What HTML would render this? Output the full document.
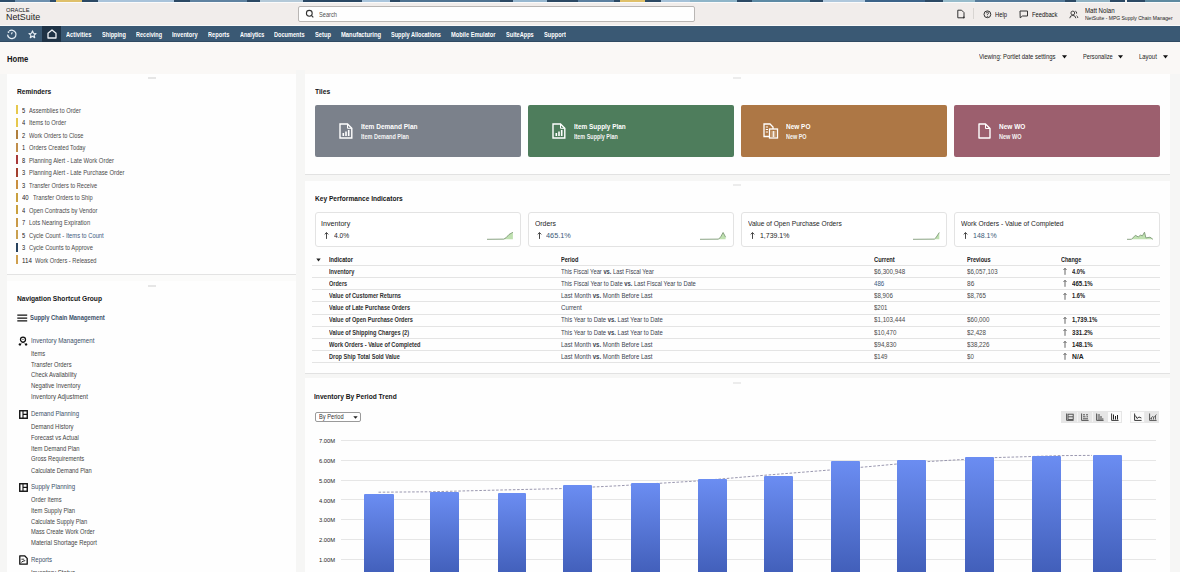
<!DOCTYPE html>
<html><head><meta charset="utf-8">
<style>
html,body{margin:0;padding:0;width:1180px;height:572px;overflow:hidden;background:#faf8f6;}
body{position:relative;font-family:"Liberation Sans",sans-serif;}
.t{position:absolute;white-space:pre;line-height:1;transform-origin:0 0;}
.abs{position:absolute;}
</style></head><body>
<div class="abs" style="left:0;top:2px;width:1180px;height:24px;background:#f1edeb;border-top:1.5px solid #fbfbfb;border-bottom:1.5px solid #fafafa;box-sizing:border-box"></div>
<div style="position:absolute;left:0px;top:0px;width:15px;height:2px;background:#2e4d6a"></div>
<div style="position:absolute;left:15px;top:0px;width:35px;height:2px;background:#6e90ae"></div>
<div style="position:absolute;left:50px;top:0px;width:6px;height:2px;background:#2e4d6a"></div>
<div style="position:absolute;left:56px;top:0px;width:26px;height:2px;background:#dfc06a"></div>
<div style="position:absolute;left:82px;top:0px;width:16px;height:2px;background:#2c4964"></div>
<div style="position:absolute;left:98px;top:0px;width:76px;height:2px;background:#a9c3da"></div>
<div style="position:absolute;left:174px;top:0px;width:16px;height:2px;background:#2c4964"></div>
<div style="position:absolute;left:190px;top:0px;width:57px;height:2px;background:#5f82a0"></div>
<div style="position:absolute;left:247px;top:0px;width:13px;height:2px;background:#2c4964"></div>
<div style="position:absolute;left:260px;top:0px;width:43px;height:2px;background:#b4c9d8"></div>
<div style="position:absolute;left:303px;top:0px;width:59px;height:2px;background:#2a4864"></div>
<div style="position:absolute;left:362px;top:0px;width:28px;height:2px;background:#aac5dc"></div>
<div style="position:absolute;left:390px;top:0px;width:10px;height:2px;background:#2c4964"></div>
<div style="position:absolute;left:400px;top:0px;width:100px;height:2px;background:#4f7391"></div>
<div style="position:absolute;left:500px;top:0px;width:13px;height:2px;background:#2c4964"></div>
<div style="position:absolute;left:513px;top:0px;width:34px;height:2px;background:#98b8d0"></div>
<div style="position:absolute;left:547px;top:0px;width:31px;height:2px;background:#2c4964"></div>
<div style="position:absolute;left:578px;top:0px;width:36px;height:2px;background:#5c80a0"></div>
<div style="position:absolute;left:614px;top:0px;width:6px;height:2px;background:#2c4964"></div>
<div style="position:absolute;left:620px;top:0px;width:25px;height:2px;background:#dfc06a"></div>
<div style="position:absolute;left:645px;top:0px;width:16px;height:2px;background:#2c4964"></div>
<div style="position:absolute;left:661px;top:0px;width:29px;height:2px;background:#a5c1d8"></div>
<div style="position:absolute;left:690px;top:0px;width:47px;height:2px;background:#8fb5c8"></div>
<div style="position:absolute;left:737px;top:0px;width:15px;height:2px;background:#2c4964"></div>
<div style="position:absolute;left:752px;top:0px;width:58px;height:2px;background:#5d8aa4"></div>
<div style="position:absolute;left:810px;top:0px;width:13px;height:2px;background:#2c4964"></div>
<div style="position:absolute;left:823px;top:0px;width:42px;height:2px;background:#b0c8dc"></div>
<div style="position:absolute;left:865px;top:0px;width:60px;height:2px;background:#3c6388"></div>
<div style="position:absolute;left:925px;top:0px;width:18px;height:2px;background:#2c4964"></div>
<div style="position:absolute;left:943px;top:0px;width:32px;height:2px;background:#98bccb"></div>
<div style="position:absolute;left:975px;top:0px;width:90px;height:2px;background:#557a99"></div>
<div style="position:absolute;left:1065px;top:0px;width:11px;height:2px;background:#2c4964"></div>
<div style="position:absolute;left:1076px;top:0px;width:34px;height:2px;background:#8fb1c2"></div>
<div style="position:absolute;left:1110px;top:0px;width:15px;height:2px;background:#2c4964"></div>
<div style="position:absolute;left:1125px;top:0px;width:2px;height:2px;background:#f0f0f0"></div>
<div style="position:absolute;left:1127px;top:0px;width:18px;height:2px;background:#2c4964"></div>
<div style="position:absolute;left:1145px;top:0px;width:35px;height:2px;background:#5e8aa0"></div>
<!-- search -->
<div class="abs" style="left:298px;top:6px;width:397px;height:16px;background:#fefefe;border:1px solid #b9b6b4;border-radius:2px;box-sizing:border-box"></div>
<svg class="abs" style="left:305px;top:9px" width="10" height="10" viewBox="0 0 10 10"><circle cx="4.3" cy="4.3" r="2.9" fill="none" stroke="#333" stroke-width="1.1"/><line x1="6.4" y1="6.4" x2="8.3" y2="8.3" stroke="#333" stroke-width="1.2"/></svg>
<!-- header right icons -->
<svg class="abs" style="left:956px;top:9px" width="10" height="10" viewBox="0 0 10 10"><path d="M1.8 1.2 H5.6 L8 3.6 V8.8 H1.8 Z" fill="none" stroke="#333" stroke-width="1"/><circle cx="7.8" cy="8.4" r="0.9" fill="#333"/></svg>
<div class="abs" style="left:973px;top:8px;width:1px;height:11px;background:#d8d5d2"></div>
<svg class="abs" style="left:983px;top:10px" width="9" height="9" viewBox="0 0 9 9"><circle cx="4.4" cy="4.3" r="3.4" fill="none" stroke="#333" stroke-width="1"/><path d="M3.3 3.3 Q3.4 2.2 4.4 2.2 Q5.5 2.2 5.5 3.2 Q5.5 4 4.4 4.4 V5.2" fill="none" stroke="#333" stroke-width="0.9"/><circle cx="4.4" cy="6.4" r="0.5" fill="#333"/></svg>
<svg class="abs" style="left:1019px;top:10px" width="10" height="9" viewBox="0 0 10 9"><path d="M1 1 H8.5 V6 H3.5 L1.2 7.8 Z" fill="none" stroke="#333" stroke-width="1"/></svg>
<svg class="abs" style="left:1069px;top:10px" width="10" height="9" viewBox="0 0 10 9"><circle cx="3.8" cy="3" r="1.9" fill="none" stroke="#333" stroke-width="0.9"/><path d="M0.8 8.2 Q1 5.4 3.8 5.4 Q6.6 5.4 6.8 8.2" fill="none" stroke="#333" stroke-width="0.9"/><path d="M6.3 1.2 Q8 1.5 7.6 3.6 M7.6 5.6 Q8.8 6.4 8.8 8" fill="none" stroke="#333" stroke-width="0.9"/></svg>
<!-- nav bar -->
<div class="abs" style="left:0;top:26px;width:1180px;height:16px;background:#3a5974;border-bottom:1px solid #2f4a62;box-sizing:border-box"></div>
<div class="abs" style="left:42px;top:26px;width:19px;height:15.5px;background:#1f3346"></div>
<svg class="abs" style="left:6px;top:28px" width="12" height="12" viewBox="0 0 12 12"><path d="M3.2 3.1 A4.2 4.2 0 1 1 1.6 6.6" fill="none" stroke="#e6eef5" stroke-width="1.25"/><circle cx="2.5" cy="4.1" r="0.9" fill="#e6eef5"/><path d="M5.4 6.3 L6.3 4.3" fill="none" stroke="#e6eef5" stroke-width="1.1"/></svg>
<svg class="abs" style="left:27.5px;top:29.5px" width="9" height="9" viewBox="0 0 9 9"><path d="M4.5 0.9 L5.5 3.3 L8 3.5 L6.1 5.1 L6.7 7.7 L4.5 6.3 L2.3 7.7 L2.9 5.1 L1 3.5 L3.5 3.3 Z" fill="none" stroke="#e6eef5" stroke-width="1.15" stroke-linejoin="round"/></svg>
<svg class="abs" style="left:46.5px;top:28.8px" width="10" height="10" viewBox="0 0 10 10"><path d="M1 9 V4.3 L5 0.9 L9 4.3 V9 Z" fill="none" stroke="#eef2f6" stroke-width="1.3" stroke-linejoin="round"/></svg>
<!-- panels -->
<div class="abs" style="left:0;top:74px;width:1180px;height:498px;background:#f6f6f5"></div>
<div class="abs" style="left:296px;top:70px;width:9px;height:502px;background:#f6f6f5"></div>
<div class="abs" style="left:7px;top:74px;width:289px;height:201px;background:#fefefe;border-bottom:1.2px solid #e3e3e3;box-sizing:border-box"></div>
<div class="abs" style="left:7px;top:275px;width:289px;height:6px;background:#fbfbfa"></div>
<div class="abs" style="left:7px;top:281px;width:289px;height:300px;background:#fefefe"></div>
<div class="abs" style="left:305px;top:74px;width:865px;height:100.8px;background:#fefefe;border-bottom:1.2px solid #e2e2e2;box-sizing:border-box"></div>
<div class="abs" style="left:305px;top:174.8px;width:865px;height:6.2px;background:#f6f6f5"></div>
<div class="abs" style="left:305px;top:181px;width:865px;height:193px;background:#fefefe;border-bottom:1.2px solid #e2e2e2;box-sizing:border-box"></div>
<div class="abs" style="left:305px;top:374px;width:865px;height:4.2px;background:#f6f6f5"></div>
<div class="abs" style="left:305px;top:378.2px;width:865px;height:200px;background:#fefefe"></div>
<!-- drag handles -->
<div class="abs" style="left:148px;top:77px;width:8px;height:2px;background:#e6e6e6"></div>
<div class="abs" style="left:148px;top:285px;width:8px;height:2px;background:#e6e6e6"></div>
<div class="abs" style="left:733px;top:77px;width:8px;height:2px;background:#ececec"></div>
<div class="abs" style="left:733px;top:184px;width:8px;height:2px;background:#ececec"></div>
<div class="abs" style="left:733px;top:382px;width:8px;height:2px;background:#ececec"></div>
<svg class="abs" style="left:1062.3px;top:54.8px" width="5" height="4" viewBox="0 0 5 4"><path d="M0 0.2 H5 L2.5 3.4 Z" fill="#111"/></svg>
<svg class="abs" style="left:1118.4px;top:54.8px" width="5" height="4" viewBox="0 0 5 4"><path d="M0 0.2 H5 L2.5 3.4 Z" fill="#111"/></svg>
<svg class="abs" style="left:1162.8px;top:54.8px" width="5" height="4" viewBox="0 0 5 4"><path d="M0 0.2 H5 L2.5 3.4 Z" fill="#111"/></svg>
<div style="position:absolute;left:16.2px;top:105.4px;width:1.9px;height:9px;background:#e6c84e"></div>
<div style="position:absolute;left:16.2px;top:117.9px;width:1.9px;height:9px;background:#e6c84e"></div>
<div style="position:absolute;left:16.2px;top:130.3px;width:1.9px;height:9px;background:#b07f3c"></div>
<div style="position:absolute;left:16.2px;top:142.8px;width:1.9px;height:9px;background:#c08e4a"></div>
<div style="position:absolute;left:16.2px;top:155.3px;width:1.9px;height:9px;background:#a8393a"></div>
<div style="position:absolute;left:16.2px;top:167.8px;width:1.9px;height:9px;background:#a3402f"></div>
<div style="position:absolute;left:16.2px;top:180.2px;width:1.9px;height:9px;background:#c98f3f"></div>
<div style="position:absolute;left:16.2px;top:192.7px;width:1.9px;height:9px;background:#c9a03f"></div>
<div style="position:absolute;left:16.2px;top:205.2px;width:1.9px;height:9px;background:#c9a03f"></div>
<div style="position:absolute;left:16.2px;top:217.6px;width:1.9px;height:9px;background:#c99a48"></div>
<div style="position:absolute;left:16.2px;top:230.1px;width:1.9px;height:9px;background:#c9a04f"></div>
<div style="position:absolute;left:16.2px;top:242.6px;width:1.9px;height:9px;background:#28425e"></div>
<div style="position:absolute;left:16.2px;top:255.0px;width:1.9px;height:9px;background:#cfa04f"></div>

<svg class="abs" style="left:16.5px;top:313.5px" width="11" height="8" viewBox="0 0 11 8"><path d="M0.3 1.2 H10.2 M0.3 4 H10.2 M0.3 6.9 H10.2" stroke="#111" stroke-width="1.25"/></svg>
<svg class="abs" style="left:18px;top:335.5px" width="10" height="10" viewBox="0 0 10 10"><circle cx="5" cy="3.6" r="2.5" fill="none" stroke="#111" stroke-width="1.3"/><circle cx="5" cy="3.3" r="0.6" fill="#111"/><circle cx="1.9" cy="8.4" r="1.2" fill="#111"/><circle cx="8.1" cy="8.4" r="1.2" fill="#111"/><path d="M3.4 7.2 L5 6.3 L6.6 7.2" fill="none" stroke="#111" stroke-width="0.8"/></svg>
<svg class="abs" style="left:18.5px;top:409.5px" width="9" height="9" viewBox="0 0 9 9"><rect x="0.75" y="0.75" width="7.5" height="7.5" fill="none" stroke="#111" stroke-width="1.4"/><path d="M4 0.75 V8.25 M4 4.4 H8.25" stroke="#111" stroke-width="1.1"/></svg>
<svg class="abs" style="left:18.5px;top:482.5px" width="9" height="9" viewBox="0 0 9 9"><rect x="0.75" y="0.75" width="7.5" height="7.5" fill="none" stroke="#111" stroke-width="1.4"/><path d="M4 0.75 V8.25 M4 4.4 H8.25" stroke="#111" stroke-width="1.1"/></svg>
<svg class="abs" style="left:18.5px;top:555px" width="9" height="10" viewBox="0 0 9 10"><path d="M0.8 0.8 H5.6 L8.2 3.4 V9.2 H0.8 Z" fill="none" stroke="#111" stroke-width="1.3" stroke-linejoin="round"/><path d="M2.4 4.2 H5.2" stroke="#222" stroke-width="0.9"/><path d="M2.3 7.4 L4 6.2 L6.2 5.6" fill="none" stroke="#222" stroke-width="1"/></svg>
<div style="position:absolute;left:315px;top:105px;width:206px;height:52px;background:#7b818b;border-radius:2px"></div>
<div style="position:absolute;left:528px;top:105px;width:206px;height:52px;background:#4e7d5c;border-radius:2px"></div>
<div style="position:absolute;left:741px;top:105px;width:206px;height:52px;background:#ad7745;border-radius:2px"></div>
<div style="position:absolute;left:954px;top:105px;width:206px;height:52px;background:#9c5f6e;border-radius:2px"></div>

<svg class="abs" style="left:339px;top:123px" width="14" height="16" viewBox="0 0 14 16"><path d="M1 1 H8.5 L12.8 5.3 V15 H1 Z" fill="none" stroke="#fff" stroke-width="1.4"/><path d="M8.5 1 V5.3 H12.8" fill="none" stroke="#fff" stroke-width="1"/><rect x="3.5" y="10" width="1.6" height="3" fill="#fff"/><rect x="6.2" y="8.5" width="1.6" height="4.5" fill="#fff"/><rect x="8.9" y="7" width="1.6" height="6" fill="#fff"/></svg>
<svg class="abs" style="left:552px;top:123px" width="14" height="16" viewBox="0 0 14 16"><path d="M1 1 H8.5 L12.8 5.3 V15 H1 Z" fill="none" stroke="#fff" stroke-width="1.4"/><path d="M8.5 1 V5.3 H12.8" fill="none" stroke="#fff" stroke-width="1"/><rect x="3.5" y="10" width="1.6" height="3" fill="#fff"/><rect x="6.2" y="8.5" width="1.6" height="4.5" fill="#fff"/><rect x="8.9" y="7" width="1.6" height="6" fill="#fff"/></svg>
<svg class="abs" style="left:763px;top:123px" width="16" height="16" viewBox="0 0 16 16"><path d="M1 1 H7 L10 4 V13.5 H1 Z" fill="none" stroke="#fff" stroke-width="1.3"/><rect x="6.5" y="6" width="8" height="9" fill="#b07a45" stroke="#fff" stroke-width="1.3"/><path d="M8.5 9 H12.5 M8.5 11 H12.5 M8.5 13 H12.5 M10.5 8 V14" stroke="#fff" stroke-width="0.8"/><path d="M2.8 4 H5 M2.8 6.5 H5 M2.8 9 H5" stroke="#fff" stroke-width="1"/></svg>
<svg class="abs" style="left:978px;top:123px" width="13" height="16" viewBox="0 0 13 16"><path d="M1 1 H7.5 L12 5.5 V15 H1 Z" fill="none" stroke="#fff" stroke-width="1.4" stroke-linejoin="round"/><path d="M7.5 1 V5.5 H12" fill="none" stroke="#fff" stroke-width="1"/></svg>
<div style="position:absolute;left:315px;top:212px;width:206px;height:35px;background:#fff;border:1px solid #e3e3e3;border-radius:3px;box-sizing:border-box"></div>
<div style="position:absolute;left:528px;top:212px;width:206px;height:35px;background:#fff;border:1px solid #e3e3e3;border-radius:3px;box-sizing:border-box"></div>
<div style="position:absolute;left:741px;top:212px;width:206px;height:35px;background:#fff;border:1px solid #e3e3e3;border-radius:3px;box-sizing:border-box"></div>
<div style="position:absolute;left:954px;top:212px;width:206px;height:35px;background:#fff;border:1px solid #e3e3e3;border-radius:3px;box-sizing:border-box"></div>
<svg class="abs" style="left:324px;top:232.3px" width="5" height="8" viewBox="0 0 5 8"><path d="M2.5 0.6 V6.9 M0.7 2.4 L2.5 0.6 L4.3 2.4" fill="none" stroke="#333" stroke-width="0.9"/></svg>
<svg class="abs" style="left:537px;top:232.3px" width="5" height="8" viewBox="0 0 5 8"><path d="M2.5 0.6 V6.9 M0.7 2.4 L2.5 0.6 L4.3 2.4" fill="none" stroke="#333" stroke-width="0.9"/></svg>
<svg class="abs" style="left:750px;top:232.3px" width="5" height="8" viewBox="0 0 5 8"><path d="M2.5 0.6 V6.9 M0.7 2.4 L2.5 0.6 L4.3 2.4" fill="none" stroke="#333" stroke-width="0.9"/></svg>
<svg class="abs" style="left:963px;top:232.3px" width="5" height="8" viewBox="0 0 5 8"><path d="M2.5 0.6 V6.9 M0.7 2.4 L2.5 0.6 L4.3 2.4" fill="none" stroke="#333" stroke-width="0.9"/></svg>
<svg class="abs" style="left:486px;top:230px" width="30" height="11" viewBox="0 0 30 11"><path d="M1.0,9.3 L17.8,9.1 L20.0,7.8 L23.0,4.5 L26.9,2.3 L26.9,9.3 Z" fill="#a9d795" opacity="0.75"/><path d="M1.0,9.3 L17.8,9.1 L20.0,7.8 L23.0,4.5 L26.9,2.3" fill="none" stroke="#7f9a78" stroke-width="0.9" stroke-linejoin="round"/></svg>
<svg class="abs" style="left:699.2px;top:230px" width="30" height="11" viewBox="0 0 30 11"><path d="M1.0,9.3 L19.6,9.1 L21.7,6.9 L24.1,2.5 L26.6,7.2 L26.6,9.3 Z" fill="#a9d795" opacity="0.75"/><path d="M1.0,9.3 L19.6,9.1 L21.7,6.9 L24.1,2.5 L26.6,7.2" fill="none" stroke="#7f9a78" stroke-width="0.9" stroke-linejoin="round"/></svg>
<svg class="abs" style="left:912.2px;top:230px" width="30" height="11" viewBox="0 0 30 11"><path d="M1.0,9.3 L22.4,9.1 L23.8,7.9 L27.3,2.5 L27.3,9.3 Z" fill="#a9d795" opacity="0.75"/><path d="M1.0,9.3 L22.4,9.1 L23.8,7.9 L27.3,2.5" fill="none" stroke="#7f9a78" stroke-width="0.9" stroke-linejoin="round"/></svg>
<svg class="abs" style="left:1126px;top:230px" width="30" height="11" viewBox="0 0 30 11"><path d="M1.0,9.3 L5.5,9.3 L9.4,5.3 L12.2,6.9 L14.6,5.1 L16.4,5.8 L18.5,2.2 L19.9,7.9 L24.0,7.2 L26.9,9.3 L26.9,9.3 Z" fill="#a9d795" opacity="0.75"/><path d="M1.0,9.3 L5.5,9.3 L9.4,5.3 L12.2,6.9 L14.6,5.1 L16.4,5.8 L18.5,2.2 L19.9,7.9 L24.0,7.2 L26.9,9.3" fill="none" stroke="#7f9a78" stroke-width="0.9" stroke-linejoin="round"/></svg>
<svg class="abs" style="left:316px;top:258px" width="5" height="4" viewBox="0 0 5 4"><path d="M0.3 0.5 H4.7 L2.5 3.5 Z" fill="#222"/></svg>
<div style="position:absolute;left:312px;top:265.0px;width:848px;height:1px;background:#e4e4e4"></div>
<div style="position:absolute;left:312px;top:277.12px;width:848px;height:1px;background:#e4e4e4"></div>
<div style="position:absolute;left:312px;top:289.25px;width:848px;height:1px;background:#e4e4e4"></div>
<div style="position:absolute;left:312px;top:301.38px;width:848px;height:1px;background:#e4e4e4"></div>
<div style="position:absolute;left:312px;top:313.5px;width:848px;height:1px;background:#e4e4e4"></div>
<div style="position:absolute;left:312px;top:325.62px;width:848px;height:1px;background:#e4e4e4"></div>
<div style="position:absolute;left:312px;top:337.75px;width:848px;height:1px;background:#e4e4e4"></div>
<div style="position:absolute;left:312px;top:349.88px;width:848px;height:1px;background:#e4e4e4"></div>
<div style="position:absolute;left:312px;top:362.0px;width:848px;height:1px;background:#e4e4e4"></div>
<svg class="abs" style="left:1063px;top:268.2px" width="4" height="7" viewBox="0 0 4 7"><path d="M2 0.4 V6.8 M0.5 1.9 L2 0.4 L3.5 1.9" fill="none" stroke="#333" stroke-width="0.75"/></svg>
<svg class="abs" style="left:1063px;top:280.3px" width="4" height="7" viewBox="0 0 4 7"><path d="M2 0.4 V6.8 M0.5 1.9 L2 0.4 L3.5 1.9" fill="none" stroke="#333" stroke-width="0.75"/></svg>
<svg class="abs" style="left:1063px;top:292.5px" width="4" height="7" viewBox="0 0 4 7"><path d="M2 0.4 V6.8 M0.5 1.9 L2 0.4 L3.5 1.9" fill="none" stroke="#333" stroke-width="0.75"/></svg>
<svg class="abs" style="left:1063px;top:316.8px" width="4" height="7" viewBox="0 0 4 7"><path d="M2 0.4 V6.8 M0.5 1.9 L2 0.4 L3.5 1.9" fill="none" stroke="#333" stroke-width="0.75"/></svg>
<svg class="abs" style="left:1063px;top:328.9px" width="4" height="7" viewBox="0 0 4 7"><path d="M2 0.4 V6.8 M0.5 1.9 L2 0.4 L3.5 1.9" fill="none" stroke="#333" stroke-width="0.75"/></svg>
<svg class="abs" style="left:1063px;top:341.0px" width="4" height="7" viewBox="0 0 4 7"><path d="M2 0.4 V6.8 M0.5 1.9 L2 0.4 L3.5 1.9" fill="none" stroke="#333" stroke-width="0.75"/></svg>
<svg class="abs" style="left:1063px;top:353.2px" width="4" height="7" viewBox="0 0 4 7"><path d="M2 0.4 V6.8 M0.5 1.9 L2 0.4 L3.5 1.9" fill="none" stroke="#333" stroke-width="0.75"/></svg>
<div style="position:absolute;left:314.5px;top:411.7px;width:46px;height:10px;background:#fff;border:1px solid #9a9a9a;border-radius:2px;box-sizing:border-box"></div>
<svg class="abs" style="left:353px;top:415.5px" width="5" height="3" viewBox="0 0 5 3"><path d="M0.3 0.3 H4.7 L2.5 2.8 Z" fill="#222"/></svg>
<div style="position:absolute;left:341px;top:439.9px;width:815px;height:1px;background:#e6e6e6"></div>
<div style="position:absolute;left:341px;top:459.72px;width:815px;height:1px;background:#e6e6e6"></div>
<div style="position:absolute;left:341px;top:479.54px;width:815px;height:1px;background:#e6e6e6"></div>
<div style="position:absolute;left:341px;top:499.36px;width:815px;height:1px;background:#e6e6e6"></div>
<div style="position:absolute;left:341px;top:519.18px;width:815px;height:1px;background:#e6e6e6"></div>
<div style="position:absolute;left:341px;top:539.0px;width:815px;height:1px;background:#e6e6e6"></div>
<div style="position:absolute;left:341px;top:558.82px;width:815px;height:1px;background:#e6e6e6"></div>
<svg class="abs" style="left:305px;top:378px" width="865" height="194" viewBox="0 0 865 194"><path d="M73.5,114.19999999999999 L124,113.80000000000001 L192,112.10000000000002 L256,110.60000000000002 L315,107.69999999999999 L392,103 L459,97.30000000000001 L525,92 L565,88.5 L592,86 L621,83.69999999999999 L658,81.5 L690,79.60000000000002 L727,78.5 L756,77.60000000000002 L787,77.39999999999998" fill="none" stroke="#8e8ca6" stroke-width="0.9" stroke-dasharray="2.6,1.6"/></svg>
<div style="position:absolute;left:364.4px;top:493.6px;width:29.2px;height:86.4px;background:linear-gradient(#6b8df2,#3f5cb6);border-radius:1px 1px 0 0"></div>
<div style="position:absolute;left:429.8px;top:491.9px;width:28.8px;height:88.1px;background:linear-gradient(#6b8df2,#3f5cb6);border-radius:1px 1px 0 0"></div>
<div style="position:absolute;left:497.6px;top:492.5px;width:28.8px;height:87.5px;background:linear-gradient(#6b8df2,#3f5cb6);border-radius:1px 1px 0 0"></div>
<div style="position:absolute;left:563px;top:484.7px;width:28.9px;height:95.3px;background:linear-gradient(#6b8df2,#3f5cb6);border-radius:1px 1px 0 0"></div>
<div style="position:absolute;left:630.8px;top:483.4px;width:28.9px;height:96.6px;background:linear-gradient(#6b8df2,#3f5cb6);border-radius:1px 1px 0 0"></div>
<div style="position:absolute;left:698.3px;top:479px;width:28.8px;height:101px;background:linear-gradient(#6b8df2,#3f5cb6);border-radius:1px 1px 0 0"></div>
<div style="position:absolute;left:763.7px;top:475.9px;width:29.2px;height:104.1px;background:linear-gradient(#6b8df2,#3f5cb6);border-radius:1px 1px 0 0"></div>
<div style="position:absolute;left:831.1px;top:461.4px;width:29.3px;height:118.6px;background:linear-gradient(#6b8df2,#3f5cb6);border-radius:1px 1px 0 0"></div>
<div style="position:absolute;left:896.6px;top:459.5px;width:29.2px;height:120.5px;background:linear-gradient(#6b8df2,#3f5cb6);border-radius:1px 1px 0 0"></div>
<div style="position:absolute;left:964.8px;top:457px;width:29.3px;height:123px;background:linear-gradient(#6b8df2,#3f5cb6);border-radius:1px 1px 0 0"></div>
<div style="position:absolute;left:1032.3px;top:455.6px;width:28.9px;height:124.4px;background:linear-gradient(#6b8df2,#3f5cb6);border-radius:1px 1px 0 0"></div>
<div style="position:absolute;left:1093.1px;top:455px;width:29.4px;height:125px;background:linear-gradient(#6b8df2,#3f5cb6);border-radius:1px 1px 0 0"></div>
<div style="position:absolute;left:1061px;top:411px;width:60.6px;height:11.7px;background:#e6e6e6"></div>
<div style="position:absolute;left:1107px;top:411px;width:14.6px;height:11.7px;background:#fbfbfb;border:1px solid #e6e6e6;box-sizing:border-box"></div>
<div style="position:absolute;left:1129.6px;top:411px;width:29.8px;height:11.7px;background:#e6e6e6"></div>
<div style="position:absolute;left:1129.6px;top:411px;width:15px;height:11.7px;background:#fbfbfb;border:1px solid #e9e9e9;box-sizing:border-box"></div>
<div style="position:absolute;left:1076.5px;top:412px;width:0.6px;height:10px;background:#f4f4f4"></div>
<div style="position:absolute;left:1092px;top:412px;width:0.6px;height:10px;background:#f4f4f4"></div>
<svg class="abs" style="left:1065.5px;top:412.8px" width="8" height="8" viewBox="0 0 8 8"><path d="M0.6 0.5 V7.4 H7.6" fill="none" stroke="#444" stroke-width="0.9"/><rect x="2" y="1.2" width="5.2" height="5.2" fill="none" stroke="#444" stroke-width="0.9"/><path d="M2.2 3.8 H7" stroke="#444" stroke-width="0.9"/></svg>
<svg class="abs" style="left:1080.8px;top:412.8px" width="8" height="8" viewBox="0 0 8 8"><path d="M0.6 0.5 V7.4 H7.6" fill="none" stroke="#444" stroke-width="0.9"/><path d="M2 1.8 H4 M5 1.8 H7 M2 3.8 H4.5 M5.5 3.8 H7 M2 5.8 H7" stroke="#444" stroke-width="0.9"/></svg>
<svg class="abs" style="left:1096.2px;top:412.8px" width="8" height="8" viewBox="0 0 8 8"><path d="M0.6 0.5 V7.4 H7.6" fill="none" stroke="#444" stroke-width="0.9"/><path d="M1.6 2 H4 M1.6 4 H6 M1.6 6 H7.4" stroke="#444" stroke-width="1"/></svg>
<svg class="abs" style="left:1111px;top:412.8px" width="8" height="8" viewBox="0 0 8 8"><path d="M0.6 0.5 V7.4 H7.6" fill="none" stroke="#222" stroke-width="0.9"/><path d="M2.5 6.5 V1.5 M4.5 6.5 V3 M6.5 6.5 V2" stroke="#222" stroke-width="1"/></svg>
<svg class="abs" style="left:1133.6px;top:412.8px" width="8" height="8" viewBox="0 0 8 8"><path d="M0.6 0.5 V7.4 H7.6" fill="none" stroke="#222" stroke-width="0.9"/><path d="M1.4 2.5 L3 5.5 L5 4 L7.4 5" fill="none" stroke="#222" stroke-width="0.9"/></svg>
<svg class="abs" style="left:1148.8px;top:412.8px" width="8" height="8" viewBox="0 0 8 8"><path d="M0.6 0.5 V7.4 H7.6" fill="none" stroke="#444" stroke-width="0.9"/><path d="M1.4 6 L3.5 3.5 L5 4.5 L7.4 1.5 M2.5 6.5 V5 M4.5 6.5 V4.5 M6.5 6.5 V3" fill="none" stroke="#444" stroke-width="0.8"/></svg>
<div class="t" style="left:6.1px;top:7.57px;font-size:5.0px;font-weight:400;color:#222;transform-origin:0 4.23px;transform:scale(1.148,1.0)">ORACLE</div>
<div class="t" style="left:6.1px;top:12.68px;font-size:9.0px;font-weight:400;color:#222;transform-origin:0 7.62px;transform:scale(0.988,1.0)">NetSuite</div>
<div class="t" style="left:318.8px;top:12.31px;font-size:6.6px;font-weight:400;color:#505050;transform-origin:0 5.59px;transform:scale(0.856,1.05)">Search</div>
<div class="t" style="left:995.0px;top:12.18px;font-size:6.4px;font-weight:400;color:#111;transform-origin:0 5.42px;transform:scale(0.912,1.1)">Help</div>
<div class="t" style="left:1031.6px;top:12.18px;font-size:6.4px;font-weight:400;color:#111;transform-origin:0 5.42px;transform:scale(0.905,1.1)">Feedback</div>
<div class="t" style="left:1085.4px;top:7.65px;font-size:6.2px;font-weight:400;color:#111;transform-origin:0 5.25px;transform:scale(0.989,1.1)">Matt Nolan</div>
<div class="t" style="left:1085.4px;top:15.90px;font-size:5.2px;font-weight:400;color:#222;transform-origin:0 4.40px;transform:scale(0.967,1.1)">NetSuite - MPG Supply Chain Manager</div>
<div class="t" style="left:66.4px;top:31.62px;font-size:6.0px;font-weight:700;color:#ffffff;transform-origin:0 5.08px;transform:scale(0.948,1.12)">Activities</div>
<div class="t" style="left:102.0px;top:31.62px;font-size:6.0px;font-weight:700;color:#ffffff;transform-origin:0 5.08px;transform:scale(0.931,1.12)">Shipping</div>
<div class="t" style="left:135.8px;top:31.62px;font-size:6.0px;font-weight:700;color:#ffffff;transform-origin:0 5.08px;transform:scale(0.920,1.12)">Receiving</div>
<div class="t" style="left:172.4px;top:31.62px;font-size:6.0px;font-weight:700;color:#ffffff;transform-origin:0 5.08px;transform:scale(0.948,1.12)">Inventory</div>
<div class="t" style="left:207.6px;top:31.62px;font-size:6.0px;font-weight:700;color:#ffffff;transform-origin:0 5.08px;transform:scale(0.944,1.12)">Reports</div>
<div class="t" style="left:239.5px;top:31.62px;font-size:6.0px;font-weight:700;color:#ffffff;transform-origin:0 5.08px;transform:scale(0.914,1.12)">Analytics</div>
<div class="t" style="left:274.2px;top:31.62px;font-size:6.0px;font-weight:700;color:#ffffff;transform-origin:0 5.08px;transform:scale(0.934,1.12)">Documents</div>
<div class="t" style="left:315.0px;top:31.62px;font-size:6.0px;font-weight:700;color:#ffffff;transform-origin:0 5.08px;transform:scale(0.960,1.12)">Setup</div>
<div class="t" style="left:340.9px;top:31.62px;font-size:6.0px;font-weight:700;color:#ffffff;transform-origin:0 5.08px;transform:scale(0.970,1.12)">Manufacturing</div>
<div class="t" style="left:391.1px;top:31.62px;font-size:6.0px;font-weight:700;color:#ffffff;transform-origin:0 5.08px;transform:scale(0.928,1.12)">Supply Allocations</div>
<div class="t" style="left:451.3px;top:31.62px;font-size:6.0px;font-weight:700;color:#ffffff;transform-origin:0 5.08px;transform:scale(0.953,1.12)">Mobile Emulator</div>
<div class="t" style="left:505.8px;top:31.62px;font-size:6.0px;font-weight:700;color:#ffffff;transform-origin:0 5.08px;transform:scale(0.934,1.12)">SuiteApps</div>
<div class="t" style="left:543.6px;top:31.62px;font-size:6.0px;font-weight:700;color:#ffffff;transform-origin:0 5.08px;transform:scale(0.948,1.12)">Support</div>
<div class="t" style="left:6.7px;top:55.11px;font-size:9.2px;font-weight:700;color:#161616;transform-origin:0 7.79px;transform:scale(0.834,1.0)">Home</div>
<div class="t" style="left:979.3px;top:54.32px;font-size:6.0px;font-weight:400;color:#222;transform-origin:0 5.08px;transform:scale(0.990,1.12)">Viewing: Portlet date settings</div>
<div class="t" style="left:1082.5px;top:54.32px;font-size:6.0px;font-weight:400;color:#222;transform-origin:0 5.08px;transform:scale(0.950,1.12)">Personalize</div>
<div class="t" style="left:1139.0px;top:54.32px;font-size:6.0px;font-weight:400;color:#222;transform-origin:0 5.08px;transform:scale(0.988,1.12)">Layout</div>
<div class="t" style="left:16.8px;top:88.34px;font-size:7.4px;font-weight:700;color:#161616;transform-origin:0 6.26px;transform:scale(0.895,1.0)">Reminders</div>
<div class="t" style="left:22.0px;top:109.01px;font-size:5.9px;font-weight:400;color:#1a1a1a;transform-origin:0 4.99px;transform:scale(0.975,1.12)">5</div>
<div class="t" style="left:28.9px;top:109.01px;font-size:5.9px;font-weight:400;color:#4a4a4a;transform-origin:0 4.99px;transform:scale(0.972,1.12)">Assemblies to Order</div>
<div class="t" style="left:22.0px;top:121.48px;font-size:5.9px;font-weight:400;color:#1a1a1a;transform-origin:0 4.99px;transform:scale(0.975,1.12)">4</div>
<div class="t" style="left:28.9px;top:121.48px;font-size:5.9px;font-weight:400;color:#4a4a4a;transform-origin:0 4.99px;transform:scale(0.988,1.12)">Items to Order</div>
<div class="t" style="left:22.0px;top:133.95px;font-size:5.9px;font-weight:400;color:#1a1a1a;transform-origin:0 4.99px;transform:scale(0.975,1.12)">2</div>
<div class="t" style="left:28.9px;top:133.95px;font-size:5.9px;font-weight:400;color:#4a4a4a;transform-origin:0 4.99px;transform:scale(0.964,1.12)">Work Orders to Close</div>
<div class="t" style="left:22.0px;top:146.42px;font-size:5.9px;font-weight:400;color:#1a1a1a;transform-origin:0 4.99px;transform:scale(0.975,1.12)">1</div>
<div class="t" style="left:28.9px;top:146.42px;font-size:5.9px;font-weight:400;color:#4a4a4a;transform-origin:0 4.99px;transform:scale(0.975,1.12)">Orders Created Today</div>
<div class="t" style="left:22.0px;top:158.89px;font-size:5.9px;font-weight:400;color:#1a1a1a;transform-origin:0 4.99px;transform:scale(0.975,1.12)">8</div>
<div class="t" style="left:28.9px;top:158.89px;font-size:5.9px;font-weight:400;color:#4a4a4a;transform-origin:0 4.99px;transform:scale(1.000,1.12)">Planning Alert - Late Work Order</div>
<div class="t" style="left:22.0px;top:171.36px;font-size:5.9px;font-weight:400;color:#1a1a1a;transform-origin:0 4.99px;transform:scale(0.975,1.12)">3</div>
<div class="t" style="left:28.9px;top:171.36px;font-size:5.9px;font-weight:400;color:#4a4a4a;transform-origin:0 4.99px;transform:scale(0.991,1.12)">Planning Alert - Late Purchase Order</div>
<div class="t" style="left:22.0px;top:183.83px;font-size:5.9px;font-weight:400;color:#1a1a1a;transform-origin:0 4.99px;transform:scale(0.975,1.12)">3</div>
<div class="t" style="left:28.9px;top:183.83px;font-size:5.9px;font-weight:400;color:#4a4a4a;transform-origin:0 4.99px;transform:scale(0.963,1.12)">Transfer Orders to Receive</div>
<div class="t" style="left:22.0px;top:196.30px;font-size:5.9px;font-weight:400;color:#1a1a1a;transform-origin:0 4.99px;transform:scale(1.021,1.12)">40</div>
<div class="t" style="left:32.6px;top:196.30px;font-size:5.9px;font-weight:400;color:#4a4a4a;transform-origin:0 4.99px;transform:scale(0.973,1.12)">Transfer Orders to Ship</div>
<div class="t" style="left:22.0px;top:208.77px;font-size:5.9px;font-weight:400;color:#1a1a1a;transform-origin:0 4.99px;transform:scale(0.975,1.12)">4</div>
<div class="t" style="left:28.9px;top:208.77px;font-size:5.9px;font-weight:400;color:#4a4a4a;transform-origin:0 4.99px;transform:scale(0.985,1.12)">Open Contracts by Vendor</div>
<div class="t" style="left:22.0px;top:221.24px;font-size:5.9px;font-weight:400;color:#1a1a1a;transform-origin:0 4.99px;transform:scale(0.975,1.12)">7</div>
<div class="t" style="left:28.9px;top:221.24px;font-size:5.9px;font-weight:400;color:#4a4a4a;transform-origin:0 4.99px;transform:scale(0.999,1.12)">Lots Nearing Expiration</div>
<div class="t" style="left:22.0px;top:233.71px;font-size:5.9px;font-weight:400;color:#1a1a1a;transform-origin:0 4.99px;transform:scale(0.975,1.12)">5</div>
<div class="t" style="left:28.9px;top:233.71px;font-size:5.9px;font-weight:400;color:#4a4a4a;transform-origin:0 4.99px;transform:scale(0.988,1.12)">Cycle Count - <span style="color:#3b5a80">Items to Count</span></div>
<div class="t" style="left:22.0px;top:246.18px;font-size:5.9px;font-weight:400;color:#1a1a1a;transform-origin:0 4.99px;transform:scale(0.975,1.12)">3</div>
<div class="t" style="left:28.9px;top:246.18px;font-size:5.9px;font-weight:400;color:#4a4a4a;transform-origin:0 4.99px;transform:scale(0.987,1.12)">Cycle Counts to Approve</div>
<div class="t" style="left:22.2px;top:258.65px;font-size:5.9px;font-weight:400;color:#1a1a1a;transform-origin:0 4.99px;transform:scale(1.044,1.12)">114</div>
<div class="t" style="left:35.4px;top:258.65px;font-size:5.9px;font-weight:400;color:#4a4a4a;transform-origin:0 4.99px;transform:scale(0.970,1.12)">Work Orders - Released</div>
<div class="t" style="left:16.8px;top:294.94px;font-size:7.4px;font-weight:700;color:#161616;transform-origin:0 6.26px;transform:scale(0.900,1.0)">Navigation Shortcut Group</div>
<div class="t" style="left:30.2px;top:315.51px;font-size:5.9px;font-weight:700;color:#3b5068;transform-origin:0 4.99px;transform:scale(0.992,1.12)">Supply Chain Management</div>
<div class="t" style="left:31.0px;top:338.61px;font-size:5.9px;font-weight:400;color:#3b5068;transform-origin:0 4.99px;transform:scale(1.052,1.12)">Inventory Management</div>
<div class="t" style="left:31.0px;top:351.96px;font-size:5.6px;font-weight:400;color:#444;transform-origin:0 4.74px;transform:scale(1.030,1.12)">Items</div>
<div class="t" style="left:31.0px;top:362.96px;font-size:5.6px;font-weight:400;color:#444;transform-origin:0 4.74px;transform:scale(1.034,1.12)">Transfer Orders</div>
<div class="t" style="left:31.0px;top:373.46px;font-size:5.6px;font-weight:400;color:#444;transform-origin:0 4.74px;transform:scale(1.050,1.12)">Check Availability</div>
<div class="t" style="left:31.0px;top:384.46px;font-size:5.6px;font-weight:400;color:#444;transform-origin:0 4.74px;transform:scale(1.061,1.12)">Negative Inventory</div>
<div class="t" style="left:31.0px;top:395.46px;font-size:5.6px;font-weight:400;color:#444;transform-origin:0 4.74px;transform:scale(1.089,1.12)">Inventory Adjustment</div>
<div class="t" style="left:31.0px;top:411.81px;font-size:5.9px;font-weight:400;color:#3b5068;transform-origin:0 4.99px;transform:scale(1.025,1.12)">Demand Planning</div>
<div class="t" style="left:31.0px;top:425.06px;font-size:5.6px;font-weight:400;color:#444;transform-origin:0 4.74px;transform:scale(1.062,1.12)">Demand History</div>
<div class="t" style="left:31.0px;top:436.16px;font-size:5.6px;font-weight:400;color:#444;transform-origin:0 4.74px;transform:scale(1.044,1.12)">Forecast vs Actual</div>
<div class="t" style="left:31.0px;top:446.66px;font-size:5.6px;font-weight:400;color:#444;transform-origin:0 4.74px;transform:scale(1.049,1.12)">Item Demand Plan</div>
<div class="t" style="left:31.0px;top:457.16px;font-size:5.6px;font-weight:400;color:#444;transform-origin:0 4.74px;transform:scale(1.037,1.12)">Gross Requirements</div>
<div class="t" style="left:31.0px;top:468.56px;font-size:5.6px;font-weight:400;color:#444;transform-origin:0 4.74px;transform:scale(1.033,1.12)">Calculate Demand Plan</div>
<div class="t" style="left:31.0px;top:484.91px;font-size:5.9px;font-weight:400;color:#3b5068;transform-origin:0 4.99px;transform:scale(1.036,1.12)">Supply Planning</div>
<div class="t" style="left:31.0px;top:498.06px;font-size:5.6px;font-weight:400;color:#444;transform-origin:0 4.74px;transform:scale(1.036,1.12)">Order Items</div>
<div class="t" style="left:31.0px;top:508.56px;font-size:5.6px;font-weight:400;color:#444;transform-origin:0 4.74px;transform:scale(1.043,1.12)">Item Supply Plan</div>
<div class="t" style="left:31.0px;top:519.66px;font-size:5.6px;font-weight:400;color:#444;transform-origin:0 4.74px;transform:scale(1.027,1.12)">Calculate Supply Plan</div>
<div class="t" style="left:31.0px;top:530.26px;font-size:5.6px;font-weight:400;color:#444;transform-origin:0 4.74px;transform:scale(1.026,1.12)">Mass Create Work Order</div>
<div class="t" style="left:31.0px;top:540.76px;font-size:5.6px;font-weight:400;color:#444;transform-origin:0 4.74px;transform:scale(1.053,1.12)">Material Shortage Report</div>
<div class="t" style="left:31.0px;top:557.61px;font-size:5.9px;font-weight:400;color:#3b5068;transform-origin:0 4.99px;transform:scale(1.017,1.12)">Reports</div>
<div class="t" style="left:31.0px;top:571.46px;font-size:5.6px;font-weight:400;color:#444;transform-origin:0 4.74px;transform:scale(1.089,1.12)">Inventory Status</div>
<div class="t" style="left:314.5px;top:89.14px;font-size:6.8px;font-weight:700;color:#161616;transform-origin:0 5.76px;transform:scale(0.989,1.0)">Tiles</div>
<div class="t" style="left:361.0px;top:123.58px;font-size:6.4px;font-weight:700;color:#ffffff;transform-origin:0 5.42px;transform:scale(1.020,1.12)">Item Demand Plan</div>
<div class="t" style="left:361.0px;top:135.21px;font-size:5.9px;font-weight:700;color:#f4f4f4;transform-origin:0 4.99px;transform:scale(0.940,1.12)">Item Demand Plan</div>
<div class="t" style="left:573.5px;top:123.58px;font-size:6.4px;font-weight:700;color:#ffffff;transform-origin:0 5.42px;transform:scale(1.006,1.12)">Item Supply Plan</div>
<div class="t" style="left:573.5px;top:135.21px;font-size:5.9px;font-weight:700;color:#f4f4f4;transform-origin:0 4.99px;transform:scale(0.923,1.12)">Item Supply Plan</div>
<div class="t" style="left:786.4px;top:123.58px;font-size:6.4px;font-weight:700;color:#ffffff;transform-origin:0 5.42px;transform:scale(1.014,1.12)">New PO</div>
<div class="t" style="left:786.4px;top:135.21px;font-size:5.9px;font-weight:700;color:#f4f4f4;transform-origin:0 4.99px;transform:scale(0.925,1.12)">New PO</div>
<div class="t" style="left:999.3px;top:123.58px;font-size:6.4px;font-weight:700;color:#ffffff;transform-origin:0 5.42px;transform:scale(1.015,1.12)">New WO</div>
<div class="t" style="left:999.3px;top:135.21px;font-size:5.9px;font-weight:700;color:#f4f4f4;transform-origin:0 4.99px;transform:scale(0.942,1.12)">New WO</div>
<div class="t" style="left:314.5px;top:195.18px;font-size:7.0px;font-weight:700;color:#161616;transform-origin:0 5.92px;transform:scale(0.943,1.0)">Key Performance Indicators</div>
<div class="t" style="left:321.0px;top:221.18px;font-size:6.4px;font-weight:400;color:#1e1e1e;transform-origin:0 5.42px;transform:scale(1.114,1.12)">Inventory</div>
<div class="t" style="left:333.6px;top:233.02px;font-size:6.0px;font-weight:400;color:#262626;transform-origin:0 5.08px;transform:scale(1.111,1.12)">4.0%</div>
<div class="t" style="left:534.6px;top:221.18px;font-size:6.4px;font-weight:400;color:#1e1e1e;transform-origin:0 5.42px;transform:scale(1.070,1.12)">Orders</div>
<div class="t" style="left:546.0px;top:233.02px;font-size:6.0px;font-weight:400;color:#3b5a78;transform-origin:0 5.08px;transform:scale(1.218,1.12)">465.1%</div>
<div class="t" style="left:747.9px;top:221.18px;font-size:6.4px;font-weight:400;color:#1e1e1e;transform-origin:0 5.42px;transform:scale(1.037,1.12)">Value of Open Purchase Orders</div>
<div class="t" style="left:759.7px;top:233.02px;font-size:6.0px;font-weight:400;color:#262626;transform-origin:0 5.08px;transform:scale(1.159,1.12)">1,739.1%</div>
<div class="t" style="left:961.1px;top:221.18px;font-size:6.4px;font-weight:400;color:#1e1e1e;transform-origin:0 5.42px;transform:scale(1.053,1.12)">Work Orders - Value of Completed</div>
<div class="t" style="left:973.3px;top:233.02px;font-size:6.0px;font-weight:400;color:#3b5a78;transform-origin:0 5.08px;transform:scale(1.164,1.12)">148.1%</div>
<div class="t" style="left:329.4px;top:257.71px;font-size:5.9px;font-weight:700;color:#222;transform-origin:0 4.99px;transform:scale(0.961,1.12)">Indicator</div>
<div class="t" style="left:560.6px;top:257.71px;font-size:5.9px;font-weight:700;color:#222;transform-origin:0 4.99px;transform:scale(0.949,1.12)">Period</div>
<div class="t" style="left:873.6px;top:257.71px;font-size:5.9px;font-weight:700;color:#222;transform-origin:0 4.99px;transform:scale(0.977,1.12)">Current</div>
<div class="t" style="left:967.1px;top:257.71px;font-size:5.9px;font-weight:700;color:#222;transform-origin:0 4.99px;transform:scale(0.948,1.12)">Previous</div>
<div class="t" style="left:1060.7px;top:257.71px;font-size:5.9px;font-weight:700;color:#222;transform-origin:0 4.99px;transform:scale(0.939,1.12)">Change</div>
<div class="t" style="left:329.4px;top:269.81px;font-size:5.9px;font-weight:700;color:#303030;transform-origin:0 4.99px;transform:scale(0.958,1.12)">Inventory</div>
<div class="t" style="left:560.6px;top:269.81px;font-size:5.9px;font-weight:400;color:#3b4350;transform-origin:0 4.99px;transform:scale(0.981,1.12)">This Fiscal Year <b>vs.</b> Last Fiscal Year</div>
<div class="t" style="left:873.6px;top:269.81px;font-size:5.9px;font-weight:400;color:#4a4a4a;transform-origin:0 4.99px;transform:scale(1.055,1.12)">$6,300,948</div>
<div class="t" style="left:967.1px;top:269.81px;font-size:5.9px;font-weight:400;color:#4a4a4a;transform-origin:0 4.99px;transform:scale(1.041,1.12)">$6,057,103</div>
<div class="t" style="left:1072.0px;top:269.81px;font-size:5.9px;font-weight:700;color:#222;transform-origin:0 4.99px;transform:scale(0.967,1.12)">4.0%</div>
<div class="t" style="left:329.4px;top:281.95px;font-size:5.9px;font-weight:700;color:#303030;transform-origin:0 4.99px;transform:scale(0.942,1.12)">Orders</div>
<div class="t" style="left:560.6px;top:281.95px;font-size:5.9px;font-weight:400;color:#3b4350;transform-origin:0 4.99px;transform:scale(0.992,1.12)">This Fiscal Year to Date <b>vs.</b> Last Fiscal Year to Date</div>
<div class="t" style="left:873.6px;top:281.95px;font-size:5.9px;font-weight:400;color:#3b5a80;transform-origin:0 4.99px;transform:scale(1.046,1.12)">486</div>
<div class="t" style="left:967.1px;top:281.95px;font-size:5.9px;font-weight:400;color:#4a4a4a;transform-origin:0 4.99px;transform:scale(1.112,1.12)">86</div>
<div class="t" style="left:1072.0px;top:281.95px;font-size:5.9px;font-weight:700;color:#222;transform-origin:0 4.99px;transform:scale(1.036,1.12)">465.1%</div>
<div class="t" style="left:329.4px;top:294.09px;font-size:5.9px;font-weight:700;color:#303030;transform-origin:0 4.99px;transform:scale(0.952,1.12)">Value of Customer Returns</div>
<div class="t" style="left:560.6px;top:294.09px;font-size:5.9px;font-weight:400;color:#3b4350;transform-origin:0 4.99px;transform:scale(1.030,1.12)">Last Month <b>vs.</b> Month Before Last</div>
<div class="t" style="left:873.6px;top:294.09px;font-size:5.9px;font-weight:400;color:#4a4a4a;transform-origin:0 4.99px;transform:scale(1.048,1.12)">$8,906</div>
<div class="t" style="left:967.1px;top:294.09px;font-size:5.9px;font-weight:400;color:#4a4a4a;transform-origin:0 4.99px;transform:scale(1.054,1.12)">$8,765</div>
<div class="t" style="left:1072.0px;top:294.09px;font-size:5.9px;font-weight:700;color:#222;transform-origin:0 4.99px;transform:scale(0.967,1.12)">1.6%</div>
<div class="t" style="left:329.4px;top:306.23px;font-size:5.9px;font-weight:700;color:#303030;transform-origin:0 4.99px;transform:scale(0.948,1.12)">Value of Late Purchase Orders</div>
<div class="t" style="left:560.6px;top:306.23px;font-size:5.9px;font-weight:400;color:#3b4350;transform-origin:0 4.99px;transform:scale(1.053,1.12)">Current</div>
<div class="t" style="left:873.6px;top:306.23px;font-size:5.9px;font-weight:400;color:#4a4a4a;transform-origin:0 4.99px;transform:scale(1.030,1.12)">$201</div>
<div class="t" style="left:329.4px;top:318.37px;font-size:5.9px;font-weight:700;color:#303030;transform-origin:0 4.99px;transform:scale(0.949,1.12)">Value of Open Purchase Orders</div>
<div class="t" style="left:560.6px;top:318.37px;font-size:5.9px;font-weight:400;color:#3b4350;transform-origin:0 4.99px;transform:scale(0.999,1.12)">This Year to Date <b>vs.</b> Last Year to Date</div>
<div class="t" style="left:873.6px;top:318.37px;font-size:5.9px;font-weight:400;color:#4a4a4a;transform-origin:0 4.99px;transform:scale(1.055,1.12)">$1,103,444</div>
<div class="t" style="left:967.1px;top:318.37px;font-size:5.9px;font-weight:400;color:#4a4a4a;transform-origin:0 4.99px;transform:scale(1.056,1.12)">$60,000</div>
<div class="t" style="left:1072.0px;top:318.37px;font-size:5.9px;font-weight:700;color:#222;transform-origin:0 4.99px;transform:scale(1.016,1.12)">1,739.1%</div>
<div class="t" style="left:329.4px;top:330.51px;font-size:5.9px;font-weight:700;color:#303030;transform-origin:0 4.99px;transform:scale(0.960,1.12)">Value of Shipping Charges (2)</div>
<div class="t" style="left:560.6px;top:330.51px;font-size:5.9px;font-weight:400;color:#3b4350;transform-origin:0 4.99px;transform:scale(0.999,1.12)">This Year to Date <b>vs.</b> Last Year to Date</div>
<div class="t" style="left:873.6px;top:330.51px;font-size:5.9px;font-weight:400;color:#4a4a4a;transform-origin:0 4.99px;transform:scale(1.052,1.12)">$10,470</div>
<div class="t" style="left:967.1px;top:330.51px;font-size:5.9px;font-weight:400;color:#4a4a4a;transform-origin:0 4.99px;transform:scale(1.054,1.12)">$2,428</div>
<div class="t" style="left:1072.0px;top:330.51px;font-size:5.9px;font-weight:700;color:#222;transform-origin:0 4.99px;transform:scale(1.036,1.12)">331.2%</div>
<div class="t" style="left:329.4px;top:342.65px;font-size:5.9px;font-weight:700;color:#303030;transform-origin:0 4.99px;transform:scale(0.959,1.12)">Work Orders - Value of Completed</div>
<div class="t" style="left:560.6px;top:342.65px;font-size:5.9px;font-weight:400;color:#3b4350;transform-origin:0 4.99px;transform:scale(1.030,1.12)">Last Month <b>vs.</b> Month Before Last</div>
<div class="t" style="left:873.6px;top:342.65px;font-size:5.9px;font-weight:400;color:#4a4a4a;transform-origin:0 4.99px;transform:scale(1.052,1.12)">$94,830</div>
<div class="t" style="left:967.1px;top:342.65px;font-size:5.9px;font-weight:400;color:#4a4a4a;transform-origin:0 4.99px;transform:scale(1.056,1.12)">$38,226</div>
<div class="t" style="left:1072.0px;top:342.65px;font-size:5.9px;font-weight:700;color:#222;transform-origin:0 4.99px;transform:scale(1.036,1.12)">148.1%</div>
<div class="t" style="left:329.4px;top:354.79px;font-size:5.9px;font-weight:700;color:#303030;transform-origin:0 4.99px;transform:scale(0.947,1.12)">Drop Ship Total Sold Value</div>
<div class="t" style="left:560.6px;top:354.79px;font-size:5.9px;font-weight:400;color:#3b4350;transform-origin:0 4.99px;transform:scale(1.030,1.12)">Last Month <b>vs.</b> Month Before Last</div>
<div class="t" style="left:873.6px;top:354.79px;font-size:5.9px;font-weight:400;color:#4a4a4a;transform-origin:0 4.99px;transform:scale(1.030,1.12)">$149</div>
<div class="t" style="left:967.1px;top:354.79px;font-size:5.9px;font-weight:400;color:#4a4a4a;transform-origin:0 4.99px;transform:scale(1.036,1.12)">$0</div>
<div class="t" style="left:1072.0px;top:354.79px;font-size:5.9px;font-weight:700;color:#222;transform-origin:0 4.99px;transform:scale(1.152,1.12)">N/A</div>
<div class="t" style="left:314.2px;top:393.48px;font-size:7.0px;font-weight:700;color:#161616;transform-origin:0 5.92px;transform:scale(0.949,1.0)">Inventory By Period Trend</div>
<div class="t" style="left:318.7px;top:414.99px;font-size:5.8px;font-weight:400;color:#333;transform-origin:0 4.91px;transform:scale(0.978,1.12)">By Period</div>
<div class="t" style="left:318.6px;top:439.17px;font-size:5.0px;font-weight:400;color:#1e1e1e;transform-origin:0 4.23px;transform:scale(1.165,1.15)">7.00M</div>
<div class="t" style="left:318.6px;top:458.99px;font-size:5.0px;font-weight:400;color:#1e1e1e;transform-origin:0 4.23px;transform:scale(1.165,1.15)">6.00M</div>
<div class="t" style="left:318.6px;top:478.81px;font-size:5.0px;font-weight:400;color:#1e1e1e;transform-origin:0 4.23px;transform:scale(1.165,1.15)">5.00M</div>
<div class="t" style="left:318.6px;top:498.63px;font-size:5.0px;font-weight:400;color:#1e1e1e;transform-origin:0 4.23px;transform:scale(1.165,1.15)">4.00M</div>
<div class="t" style="left:318.6px;top:518.45px;font-size:5.0px;font-weight:400;color:#1e1e1e;transform-origin:0 4.23px;transform:scale(1.165,1.15)">3.00M</div>
<div class="t" style="left:318.6px;top:538.27px;font-size:5.0px;font-weight:400;color:#1e1e1e;transform-origin:0 4.23px;transform:scale(1.165,1.15)">2.00M</div>
<div class="t" style="left:318.6px;top:558.09px;font-size:5.0px;font-weight:400;color:#1e1e1e;transform-origin:0 4.23px;transform:scale(1.165,1.15)">1.00M</div>
</body></html>
